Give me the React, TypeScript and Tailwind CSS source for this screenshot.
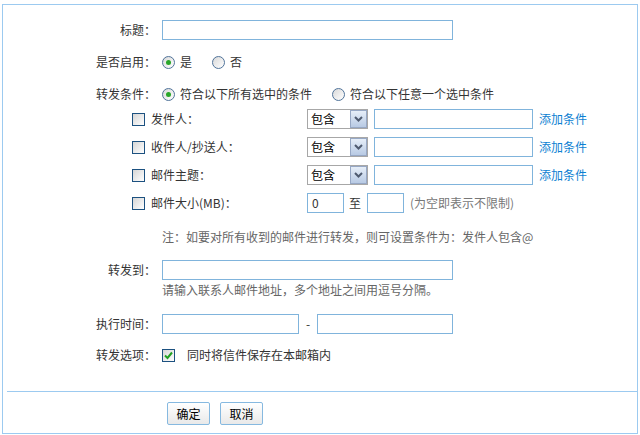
import React from 'react';

// small hand-drawn form controls, old webmail style
const Radio = ({ checked }: { checked?: boolean }) => (
    <span className="flex h-[13px] w-[13px] shrink-0 items-center justify-center rounded-full border border-[#50739a] bg-linear-to-br from-[#d9d9d9] to-white">
        {checked && <span className="h-[5px] w-[5px] rounded-full bg-[#29a629]" />}
    </span>
);

const Check = ({ checked }: { checked?: boolean }) => (
    <span className="flex h-[13px] w-[13px] shrink-0 items-center justify-center border border-[#1c5180] bg-linear-to-br from-[#d6d6d6] to-white">
        {checked && (
            <svg width="9" height="9" viewBox="0 0 9 9">
                <path d="M1 4.5 L3.5 7 L8 1.5" stroke="#22a022" strokeWidth="2" fill="none" />
            </svg>
        )}
    </span>
);

const Select = () => (
    <div className="flex h-[20px] w-[61px] shrink-0 items-center justify-between border border-[#a7a7a7] bg-white pl-[3px]">
        <span className="text-black">包含</span>
        <span className="flex h-[18px] w-[17px] items-center justify-center border border-[#97a8c5] bg-linear-to-b from-[#e6eef8] to-[#b8cae4]">
            <svg width="9" height="6" viewBox="0 0 9 6">
                <path d="M1 1 L4.5 4.5 L8 1" stroke="#4f5b70" strokeWidth="2" fill="none" />
            </svg>
        </span>
    </div>
);

const Input = ({ w, value }: { w: string; value?: string }) => (
    <div className={`flex h-[20px] shrink-0 items-center border border-[#80b4dc] bg-white pl-[4px] ${w}`}>
        {value}
    </div>
);

const Label = ({ text }: { text: string }) => (
    <span className="w-[153px] shrink-0 pr-0 text-right">{text}</span>
);

const Condition = ({ text, top }: { text: string; top: string }) => (
    <div className={`flex h-[20px] items-center pl-[129px] ${top}`}>
        <Check />
        <span className="ml-[6px] w-[156px] shrink-0">{text}</span>
        <Select />
        <div className="ml-[6px]">
            <Input w="w-[159px]" />
        </div>
        <a className="ml-[6px] cursor-pointer text-[#0d7fd2]">添加条件</a>
    </div>
);

export default function App() {
    return (
        <div className="min-h-[435px] bg-white pl-[2px] pt-[4px] font-['Noto_Sans_CJK_SC',sans-serif] text-[12px] text-[#333]">
            <div className="flex h-[430px] w-[636px] flex-col border border-[#9ccaf0]">
                <div className="mt-[15px] flex h-[20px] items-center">
                    <Label text="标题：" />
                    <div className="ml-[6px]">
                        <Input w="w-[291px]" />
                    </div>
                </div>

                <div className="mt-[12px] flex h-[20px] items-center">
                    <Label text="是否启用：" />
                    <div className="ml-[6px] flex items-center">
                        <Radio checked />
                        <span className="ml-[5px]">是</span>
                        <span className="ml-[20px]"><Radio /></span>
                        <span className="ml-[5px]">否</span>
                    </div>
                </div>

                <div className="mt-[12px] flex h-[20px] items-center">
                    <Label text="转发条件：" />
                    <div className="ml-[6px] flex items-center">
                        <Radio checked />
                        <span className="ml-[5px]">符合以下所有选中的条件</span>
                        <span className="ml-[20px]"><Radio /></span>
                        <span className="ml-[5px]">符合以下任意一个选中条件</span>
                    </div>
                </div>

                <Condition text="发件人：" top="mt-[5px]" />
                <Condition text="收件人/抄送人：" top="mt-[8px]" />
                <Condition text="邮件主题：" top="mt-[8px]" />

                <div className="mt-[8px] flex h-[20px] items-center pl-[129px]">
                    <Check />
                    <span className="ml-[6px] w-[156px] shrink-0">邮件大小(MB)：</span>
                    <Input w="w-[37px]" value="0" />
                    <span className="ml-[5px]">至</span>
                    <div className="ml-[6px]">
                        <Input w="w-[37px]" />
                    </div>
                    <span className="ml-[6px] text-[#777]">(为空即表示不限制)</span>
                </div>

                <div className="ml-[159px] mt-[17px] h-[14px] leading-[14px] text-[#666]">
                    注：如要对所有收到的邮件进行转发，则可设置条件为：发件人包含@
                </div>

                <div className="mt-[16px] flex h-[20px] items-center">
                    <Label text="转发到：" />
                    <div className="ml-[6px]">
                        <Input w="w-[291px]" />
                    </div>
                </div>
                <div className="ml-[159px] mt-[3px] h-[14px] leading-[14px] text-[#666]">
                    请输入联系人邮件地址，多个地址之间用逗号分隔。
                </div>

                <div className="mt-[17px] flex h-[20px] items-center">
                    <Label text="执行时间：" />
                    <div className="ml-[6px] flex items-center">
                        <Input w="w-[137px]" />
                        <span className="w-[18px] text-center">-</span>
                        <Input w="w-[136px]" />
                    </div>
                </div>

                <div className="mt-[11px] flex h-[20px] items-center">
                    <Label text="转发选项：" />
                    <div className="ml-[6px] flex items-center">
                        <Check checked />
                        <span className="ml-[12px]">同时将信件保存在本邮箱内</span>
                    </div>
                </div>

                <div className="ml-[4px] mt-[26px] h-px bg-[#9ccaf0]" />

                <div className="ml-[164px] mt-[10px] flex gap-[10px]">
                    <button className="h-[23px] w-[43px] rounded-[2px] border border-[#86b9e0] bg-linear-to-b from-white to-[#e9e9e9] text-black">
                        确定
                    </button>
                    <button className="h-[23px] w-[43px] rounded-[2px] border border-[#86b9e0] bg-linear-to-b from-white to-[#e9e9e9] text-black">
                        取消
                    </button>
                </div>
            </div>
        </div>
    );
}
